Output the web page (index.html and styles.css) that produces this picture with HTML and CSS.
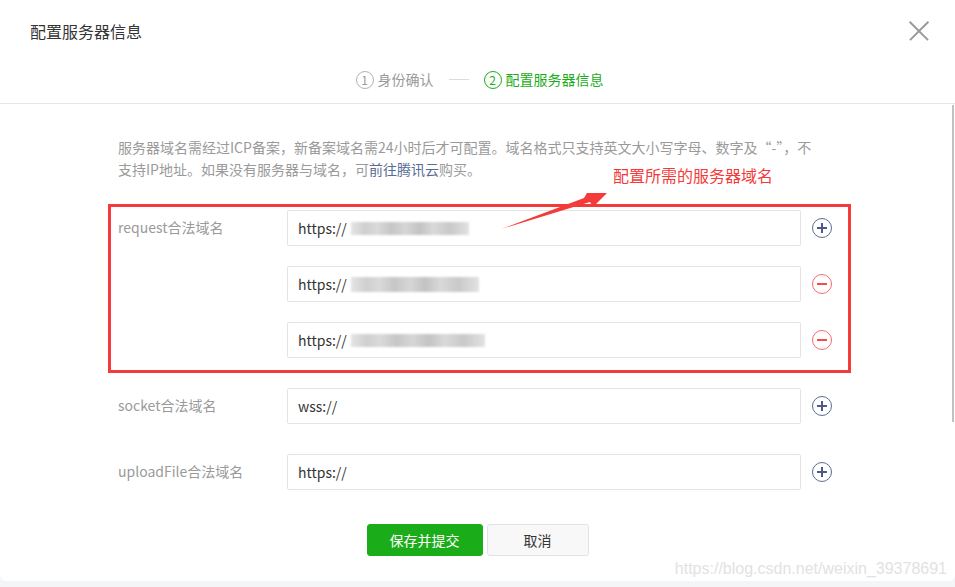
FILE: index.html
```html
<!DOCTYPE html>
<html lang="zh-CN">
<head>
	<meta charset="UTF-8">
	<title>配置服务器信息</title>
	<link rel="stylesheet" href="styles.css">
</head>
<body>
	<div class="dialog">
		<div class="dialog-hd">
			<h3 class="dialog-title">配置服务器信息</h3>
			<a class="dialog-close" href="javascript:void(0)"></a>
		</div>

		<div class="steps">
			<span class="step"><i class="step-num">1</i>身份确认</span>
			<span class="step-line"></span>
			<span class="step current"><i class="step-num">2</i>配置服务器信息</span>
		</div>

		<div class="dialog-bd">
			<p class="tips">服务器域名需经过ICP备案，新备案域名需24小时后才可配置。域名格式只支持英文大小写字母、数字及“-”，不<br>支持IP地址。如果没有服务器与域名，可<a href="javascript:void(0)">前往腾讯云</a>购买。</p>

			<div class="form">
				<div class="field">
					<label class="field-label">request合法域名</label>
					<div class="field-inputs">
						<div class="input-row">
							<div class="input">https://<span class="mask mask-1"></span></div>
							<a class="op add" href="javascript:void(0)"></a>
						</div>
						<div class="input-row">
							<div class="input">https://<span class="mask mask-2"></span></div>
							<a class="op del" href="javascript:void(0)"></a>
						</div>
						<div class="input-row">
							<div class="input">https://<span class="mask mask-3"></span></div>
							<a class="op del" href="javascript:void(0)"></a>
						</div>
					</div>
				</div>

				<div class="field">
					<label class="field-label">socket合法域名</label>
					<div class="field-inputs">
						<div class="input-row">
							<div class="input">wss://</div>
							<a class="op add" href="javascript:void(0)"></a>
						</div>
					</div>
				</div>

				<div class="field">
					<label class="field-label">uploadFile合法域名</label>
					<div class="field-inputs">
						<div class="input-row">
							<div class="input">https://</div>
							<a class="op add" href="javascript:void(0)"></a>
						</div>
					</div>
				</div>
			</div>

			<div class="btns">
				<a class="btn btn-primary" href="javascript:void(0)">保存并提交</a>
				<a class="btn btn-default" href="javascript:void(0)">取消</a>
			</div>
		</div>

		<!-- 标注 -->
		<div class="mark-box"></div>
		<span class="mark-text">配置所需的服务器域名</span>
		<svg class="mark-arrow" width="120" height="45" viewBox="495 188 120 45">
			<polygon points="501,229 584,198 587,193 607,193 593,207 590,202" fill="#f53a3a"/>
		</svg>
		<div class="scrollbar"></div>
		<span class="watermark">https://blog.csdn.net/weixin_39378691</span>
	</div>
</body>
</html>
```

FILE: styles.css
```css
body,div,p,h3,label{
	margin:0;
	padding:0;
}
a{
	text-decoration:none;
}
body{
	background:#f4f5f7;
	font:14px/1.5 "Noto Sans CJK SC","Microsoft YaHei",sans-serif;
	color:#353535;
	height:587px;
	overflow:hidden;
}
.dialog{
	position:relative;
	height:581px;
	background:#fff;
	border-radius:0 0 6px 6px;
}

/* header */
.dialog-hd{
	display:flex;
	align-items:center;
	justify-content:space-between;
	height:62px;
	padding:0 25px 0 30px;
}
.dialog-title{
	font-size:16px;
	font-weight:400;
	color:#353535;
}
.dialog-close{
	position:relative;
	width:22px;
	height:22px;
}
.dialog-close:before,
.dialog-close:after{
	content:"";
	position:absolute;
	top:10px;
	left:-2px;
	width:26px;
	height:1.5px;
	background:#9a9a9a;
	transform:rotate(45deg);
}
.dialog-close:after{
	transform:rotate(-45deg);
}

/* steps */
.steps{
	display:flex;
	justify-content:center;
	align-items:center;
	padding:7px 0 13px 4px;
	line-height:21px;
	border-bottom:1px solid #e7e7e7;
	color:#9a9a9a;
	font-size:14px;
}
.step{
	display:flex;
	align-items:center;
}
.step-num{
	display:inline-block;
	width:16px;
	height:16px;
	line-height:16px;
	margin-right:4px;
	border:1px solid #b2b2b2;
	border-radius:50%;
	text-align:center;
	font-style:normal;
	font-size:12px;
}
.step-line{
	width:20px;
	height:1px;
	margin:0 15px;
	background:#dcdcdc;
}
.step.current{
	color:#1aad19;
}
.step.current .step-num{
	border-color:#1aad19;
}

/* body */
.dialog-bd{
	padding:32px 0 0 118px;
}
.tips{
	line-height:22px;
	font-size:14px;
	color:#9a9a9a;
	white-space:nowrap;
}
.tips a{
	color:#576b95;
}

.form{
	margin-top:30px;
}
.field{
	display:flex;
	margin-bottom:30px;
}
.field-label{
	width:169px;
	line-height:34px;
	color:#9a9a9a;
}
.field-inputs{
	display:flex;
	flex-direction:column;
	gap:20px;
}
.input-row{
	display:flex;
	align-items:center;
}
.input{
	display:flex;
	align-items:center;
	box-sizing:border-box;
	width:514px;
	height:36px;
	padding:0 10px;
	border:1px solid #e4e4e4;
	border-radius:2px;
	color:#353535;
}
.mask{
	display:inline-block;
	height:13px;
	margin-left:4px;
	filter:blur(1.2px);
	background:linear-gradient(90deg,#e4e4e4 0,#cfcfcf 12%,#dadada 22%,#c6c6c6 34%,#d6d6d6 46%,#c3c3c3 58%,#d9d9d9 70%,#c9c9c9 84%,#e2e2e2 100%);
}
.mask-1{width:118px;}
.mask-2{width:128px;height:15px;}
.mask-3{width:134px;}

.op{
	position:relative;
	width:20px;
	height:20px;
	margin-left:11px;
	border:1px solid #5e6b94;
	border-radius:50%;
	box-sizing:border-box;
}
.op:before,
.op:after{
	content:"";
	position:absolute;
	top:8px;
	left:4px;
	width:10px;
	height:2px;
	background:#4b5a8a;
}
.op.add:after{
	transform:rotate(90deg);
}
.op.del{
	border-color:#fa6a6a;
}
.op.del:before{
	background:#f74b4b;
}
.op.del:after{
	display:none;
}

.btns{
	display:flex;
	justify-content:center;
	gap:4px;
	margin:34px 0 0 -118px;
}
.btn{
	box-sizing:border-box;
	height:32px;
	line-height:30px;
	text-align:center;
	border-radius:3px;
	font-size:14px;
}
.btn-primary{
	width:116px;
	background:#1aad19;
	border:1px solid #1aad19;
	color:#fff;
}
.btn-default{
	width:102px;
	background:#f8f8f8;
	border:1px solid #e3e3e3;
	color:#353535;
}

/* annotations */
.mark-box{
	position:absolute;
	left:108px;
	top:204px;
	width:743px;
	height:169px;
	box-sizing:border-box;
	border:3px solid #f53a3a;
}
.mark-text{
	position:absolute;
	left:613px;
	top:164px;
	line-height:22px;
	font-size:16px;
	color:#f53a3a;
}
.mark-arrow{
	position:absolute;
	left:495px;
	top:188px;
}
.scrollbar{
	position:absolute;
	right:1px;
	top:105px;
	width:2px;
	height:317px;
	background:#c1c1c1;
}
.watermark{
	position:absolute;
	right:8px;
	bottom:3px;
	font:16px "Liberation Sans",Arial,sans-serif;
	color:#e2e2e2;
}
```
